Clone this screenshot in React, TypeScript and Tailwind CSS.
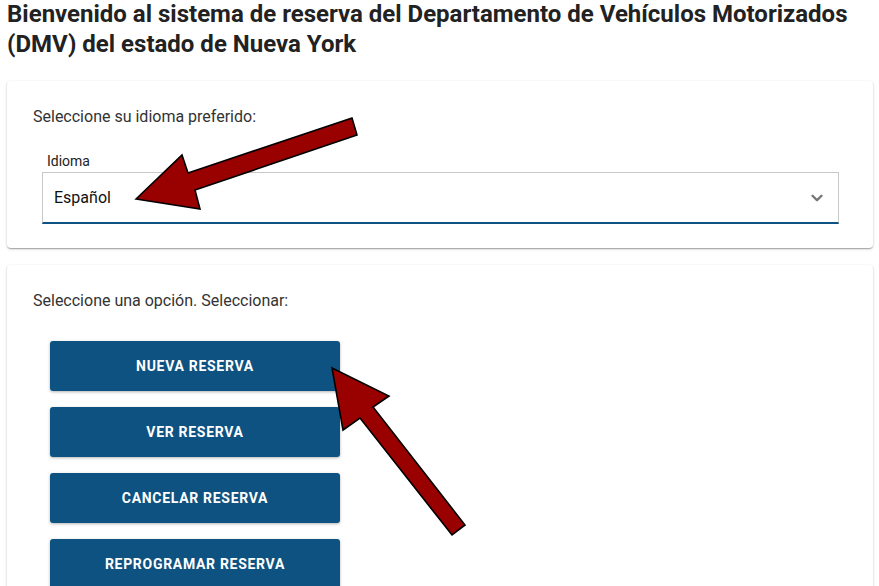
import { ChevronDown } from "lucide-react";

const options = ["Nueva reserva", "Ver reserva", "Cancelar reserva", "Reprogramar reserva"];

function Arrows() {
  return (
    <svg className="pointer-events-none absolute left-0 top-0" width="879" height="586" viewBox="0 0 879 586">
      <polygon
        points="136,199 182,155 188,173 352,118 357,135 195,190 200,209"
        fill="#990000"
        stroke="#000"
        strokeWidth="1.6"
        strokeLinejoin="miter"
      />
      <polygon
        points="332,368 389,396 373,407 465,525 452,535 360,418 343,430"
        fill="#990000"
        stroke="#000"
        strokeWidth="1.6"
        strokeLinejoin="miter"
      />
    </svg>
  );
}

export default function App() {
  return (
    <div className="relative h-[586px] w-[879px] overflow-hidden bg-white font-['Roboto',_'Liberation_Sans',_sans-serif]">
      <h1 className="-mt-px pl-[7px] text-[24px] font-bold leading-[30px] text-[#222]">
        Bienvenido al sistema de reserva del Departamento de Vehículos Motorizados (DMV) del estado de Nueva York
      </h1>

      <div className="ml-[7px] mt-[22px] w-[866px] rounded bg-white px-[26px] pb-[24px] pt-[24px] shadow-[0_1px_3px_rgba(0,0,0,0.2),0_1px_1px_rgba(0,0,0,0.14),0_2px_1px_-1px_rgba(0,0,0,0.12)]">
        <p className="text-base leading-6 text-[#333]">Seleccione su idioma preferido:</p>
        <div className="ml-[9px] mt-[24px] w-[797px]">
          <label className="block pl-[5px] text-sm leading-4 text-[#222]">Idioma</label>
          <div className="mt-[3px] flex h-[52px] items-center justify-between border border-b-2 border-[#c8c8c8] border-b-[#0d5280] pl-[11px] pr-[12px]">
            <span className="text-base text-[#111]">Español</span>
            <ChevronDown className="h-[18px] w-[18px] text-[#777]" strokeWidth={3.2} />
          </div>
        </div>
      </div>

      <div className="ml-[7px] mt-[17px] w-[866px] rounded bg-white px-[26px] pb-[24px] pt-[24px] shadow-[0_1px_3px_rgba(0,0,0,0.2),0_1px_1px_rgba(0,0,0,0.14),0_2px_1px_-1px_rgba(0,0,0,0.12)]">
        <p className="text-base leading-6 text-[#333]">Seleccione una opción. Seleccionar:</p>
        <div className="ml-[17px] mt-[28px] flex flex-col gap-4">
          {options.map((o) => (
            <button
              key={o}
              className="h-[50px] w-[290px] rounded-[3px] bg-[#0d5280] text-sm font-bold uppercase tracking-[0.7px] text-white shadow-[0_1px_3px_rgba(0,0,0,0.3)]"
            >
              {o}
            </button>
          ))}
        </div>
      </div>

      <Arrows />
    </div>
  );
}
